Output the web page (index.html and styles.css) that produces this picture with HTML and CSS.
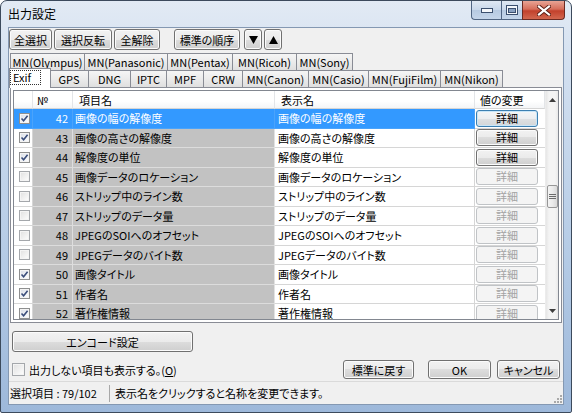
FILE: index.html
```html
<!DOCTYPE html>
<html lang="ja">
<head>
<meta charset="utf-8">
<title>出力設定</title>
<link rel="stylesheet" href="styles.css">
</head>
<body>
<div class="window">
  <div class="titlebar">
    <span class="title">出力設定</span>
    <div class="caption">
      <span class="cap cap-min"><svg width="12" height="5" viewBox="0 0 12 5"><rect x="0.5" y="0.5" width="11" height="4" fill="#f4f7fb" stroke="#3b4f6e"/></svg></span>
      <span class="cap cap-max"><svg width="12" height="10" viewBox="0 0 12 10"><rect x="0.5" y="0.5" width="11" height="9" fill="#f4f7fb" stroke="#3b4f6e"/><rect x="2.5" y="3.5" width="7" height="4" fill="#8aa1c1" stroke="#3b4f6e"/></svg></span>
      <span class="cap cap-close"><svg width="14" height="11" viewBox="0 0 14 11"><path d="M2 1.5 L12 9.5 M12 1.5 L2 9.5" stroke="#5b1f16" stroke-width="4" stroke-linecap="square"/><path d="M2 1.5 L12 9.5 M12 1.5 L2 9.5" stroke="#ffffff" stroke-width="2.2" stroke-linecap="square"/></svg></span>
    </div>
  </div>
  <div class="client">
    <div class="toolbar">
      <button class="btn b-all">全選択</button>
      <button class="btn b-inv">選択反転</button>
      <button class="btn b-none">全解除</button>
      <button class="btn b-order">標準の順序</button>
      <button class="btn b-arrow"><svg width="9" height="8" viewBox="0 0 9 8"><path d="M0 0 H9 L4.5 8 Z" fill="#000"/></svg></button>
      <button class="btn b-arrow b-up"><svg width="9" height="8" viewBox="0 0 9 8"><path d="M0 8 H9 L4.5 0 Z" fill="#000"/></svg></button>
    </div>
    <div class="tabs">
      <div class="tabrow row1">
        <span class="tab">MN(Olympus)</span>
        <span class="tab">MN(Panasonic)</span>
        <span class="tab">MN(Pentax)</span>
        <span class="tab">MN(Ricoh)</span>
        <span class="tab">MN(Sony)</span>
      </div>
      <div class="tabrow row2">
        <span class="tab tab-sel"><span class="focus">Exif</span></span>
        <span class="tab">GPS</span>
        <span class="tab">DNG</span>
        <span class="tab">IPTC</span>
        <span class="tab">MPF</span>
        <span class="tab">CRW</span>
        <span class="tab">MN(Canon)</span>
        <span class="tab">MN(Casio)</span>
        <span class="tab">MN(FujiFilm)</span>
        <span class="tab">MN(Nikon)</span>
      </div>
    </div>
    <div class="panel">
      <div class="list">
        <div class="grid">
          <div class="row head">
            <span class="c c-chk"></span>
            <span class="c c-no">№</span>
            <span class="c c-name">項目名</span>
            <span class="c c-disp">表示名</span>
            <span class="c c-val">値の変更</span>
          </div>
          <div class="row sel">
            <span class="c c-chk"><span class="cb on"><svg width="9" height="9" viewBox="0 0 9 9"><path d="M1.5 4.5 L3.6 6.8 L7.6 1.8" fill="none" stroke="#3a4d7a" stroke-width="1.6"/></svg></span></span>
            <span class="c c-no">42</span>
            <span class="c c-name">画像の幅の解像度</span>
            <span class="c c-disp">画像の幅の解像度</span>
            <span class="c c-val"><span class="dbtn focused">詳細</span></span>
          </div>
          <div class="row">
            <span class="c c-chk"><span class="cb on"><svg width="9" height="9" viewBox="0 0 9 9"><path d="M1.5 4.5 L3.6 6.8 L7.6 1.8" fill="none" stroke="#3a4d7a" stroke-width="1.6"/></svg></span></span>
            <span class="c c-no">43</span>
            <span class="c c-name">画像の高さの解像度</span>
            <span class="c c-disp">画像の高さの解像度</span>
            <span class="c c-val"><span class="dbtn">詳細</span></span>
          </div>
          <div class="row">
            <span class="c c-chk"><span class="cb on"><svg width="9" height="9" viewBox="0 0 9 9"><path d="M1.5 4.5 L3.6 6.8 L7.6 1.8" fill="none" stroke="#3a4d7a" stroke-width="1.6"/></svg></span></span>
            <span class="c c-no">44</span>
            <span class="c c-name">解像度の単位</span>
            <span class="c c-disp">解像度の単位</span>
            <span class="c c-val"><span class="dbtn">詳細</span></span>
          </div>
          <div class="row">
            <span class="c c-chk"><span class="cb"></span></span>
            <span class="c c-no">45</span>
            <span class="c c-name">画像データのロケーション</span>
            <span class="c c-disp">画像データのロケーション</span>
            <span class="c c-val"><span class="dbtn off">詳細</span></span>
          </div>
          <div class="row">
            <span class="c c-chk"><span class="cb"></span></span>
            <span class="c c-no">46</span>
            <span class="c c-name">ストリップ中のライン数</span>
            <span class="c c-disp">ストリップ中のライン数</span>
            <span class="c c-val"><span class="dbtn off">詳細</span></span>
          </div>
          <div class="row">
            <span class="c c-chk"><span class="cb"></span></span>
            <span class="c c-no">47</span>
            <span class="c c-name">ストリップのデータ量</span>
            <span class="c c-disp">ストリップのデータ量</span>
            <span class="c c-val"><span class="dbtn off">詳細</span></span>
          </div>
          <div class="row">
            <span class="c c-chk"><span class="cb"></span></span>
            <span class="c c-no">48</span>
            <span class="c c-name">JPEGのSOIへのオフセット</span>
            <span class="c c-disp">JPEGのSOIへのオフセット</span>
            <span class="c c-val"><span class="dbtn off">詳細</span></span>
          </div>
          <div class="row">
            <span class="c c-chk"><span class="cb"></span></span>
            <span class="c c-no">49</span>
            <span class="c c-name">JPEGデータのバイト数</span>
            <span class="c c-disp">JPEGデータのバイト数</span>
            <span class="c c-val"><span class="dbtn off">詳細</span></span>
          </div>
          <div class="row">
            <span class="c c-chk"><span class="cb on"><svg width="9" height="9" viewBox="0 0 9 9"><path d="M1.5 4.5 L3.6 6.8 L7.6 1.8" fill="none" stroke="#3a4d7a" stroke-width="1.6"/></svg></span></span>
            <span class="c c-no">50</span>
            <span class="c c-name">画像タイトル</span>
            <span class="c c-disp">画像タイトル</span>
            <span class="c c-val"><span class="dbtn off">詳細</span></span>
          </div>
          <div class="row">
            <span class="c c-chk"><span class="cb on"><svg width="9" height="9" viewBox="0 0 9 9"><path d="M1.5 4.5 L3.6 6.8 L7.6 1.8" fill="none" stroke="#3a4d7a" stroke-width="1.6"/></svg></span></span>
            <span class="c c-no">51</span>
            <span class="c c-name">作者名</span>
            <span class="c c-disp">作者名</span>
            <span class="c c-val"><span class="dbtn off">詳細</span></span>
          </div>
          <div class="row">
            <span class="c c-chk"><span class="cb on"><svg width="9" height="9" viewBox="0 0 9 9"><path d="M1.5 4.5 L3.6 6.8 L7.6 1.8" fill="none" stroke="#3a4d7a" stroke-width="1.6"/></svg></span></span>
            <span class="c c-no">52</span>
            <span class="c c-name">著作権情報</span>
            <span class="c c-disp">著作権情報</span>
            <span class="c c-val"><span class="dbtn off">詳細</span></span>
          </div>
        </div>
        <div class="sb">
          <span class="sb-btn"><svg width="7" height="4" viewBox="0 0 7 4"><path d="M0 4 H7 L3.5 0 Z" fill="#3d3d3d"/></svg></span>
          <span class="sb-track"><span class="sb-thumb"><svg width="7" height="7" viewBox="0 0 7 7"><path d="M0 1.5 H7 M0 3.5 H7 M0 5.5 H7" stroke="#6b6b6b" stroke-width="1"/></svg></span></span>
          <span class="sb-btn"><svg width="7" height="4" viewBox="0 0 7 4"><path d="M0 0 H7 L3.5 4 Z" fill="#3d3d3d"/></svg></span>
        </div>
      </div>
    </div>
    <button class="btn b-encode">エンコード設定</button>
    <div class="optrow">
      <label class="opt"><span class="cb big"></span>出力しない項目も表示する。(<u>O</u>)</label>
      <div class="dlgbtns">
        <button class="btn b-reset">標準に戻す</button>
        <button class="btn b-ok">OK</button>
        <button class="btn b-cancel">キャンセル</button>
      </div>
    </div>
    <div class="status">
      <span class="st-left">選択項目 : 79/102</span>
      <span class="st-sep"></span>
      <span class="st-right">表示名をクリックすると名称を変更できます。</span>
      <span class="grip"><svg width="9" height="9" viewBox="0 0 9 9"><g fill="#a9a9a9"><rect x="7" y="1" width="2" height="2"/><rect x="4" y="4" width="2" height="2"/><rect x="7" y="4" width="2" height="2"/><rect x="1" y="7" width="2" height="2"/><rect x="4" y="7" width="2" height="2"/><rect x="7" y="7" width="2" height="2"/></g></svg></span>
    </div>
  </div>
</div>
</body>
</html>
```

FILE: styles.css
```css
* { box-sizing: border-box; }
html, body { margin: 0; padding: 0; background: #ffffff; }
body {
  font-family: "Noto Sans CJK JP", "Noto Sans", sans-serif;
  font-size: 11px;
  color: #000;
  font-feature-settings: "palt" 1;
}

.window {
  width: 572px;
  height: 413px;
  border: 1px solid #3c4a5c;
  border-radius: 7px 7px 2px 2px;
  background: linear-gradient(180deg, #e2eaf4 0%, #d0deef 20%, #b6cce6 60%, #9db8da 100%);
  padding: 0 7px 7px 7px;
  display: flex;
  flex-direction: column;
  overflow: hidden;
}

.titlebar {
  height: 26px;
  display: flex;
  align-items: flex-start;
  flex: none;
}
.title {
  font-size: 12px;
  line-height: 25px;
  color: #000;
}
.caption {
  margin-left: auto;
  margin-right: -1px;
  display: flex;
  height: 19px;
}
.cap {
  height: 19px;
  display: flex;
  align-items: center;
  justify-content: center;
  border: 1px solid #4f6482;
  border-top: none;
}
.cap-min {
  width: 30px;
  border-radius: 0 0 0 4px;
  border-right: none;
  background: linear-gradient(180deg, #dfe8f3 0%, #c8d7ea 50%, #b6c9e1 50%, #c4d5ea 100%);
}
.cap-max {
  width: 21px;
  border-right: none;
  background: linear-gradient(180deg, #dfe8f3 0%, #c8d7ea 50%, #b6c9e1 50%, #c4d5ea 100%);
}
.cap-close {
  width: 43px;
  border-radius: 0 0 4px 0;
  border-color: #6b2a22;
  background: linear-gradient(180deg, #e8a495 0%, #d66e5b 45%, #c2412c 55%, #d2674f 100%);
}

.client {
  flex: 1;
  background: #f0f0f0;
  border: 1px solid #8498b2;
  display: flex;
  flex-direction: column;
  min-height: 0;
}

/* buttons */
.btn {
  font: inherit;
  font-feature-settings: "palt" 1;
  color: #000;
  height: 21px;
  padding: 0;
  border: 1px solid #707070;
  border-radius: 3px;
  background: linear-gradient(180deg, #f2f2f2 0%, #ebebeb 50%, #dddddd 50%, #cfcfcf 100%);
  box-shadow: inset 0 0 0 1px #fbfbfb;
  display: flex;
  align-items: center;
  justify-content: center;
  flex: none;
}

.toolbar {
  display: flex;
  padding-top: 1px;
  flex: none;
}
.b-all { width: 43px; }
.b-inv { width: 58px; margin-left: 2px; }
.b-none { width: 46px; margin-left: 2px; }
.b-order { width: 66px; margin-left: 14px; }
.b-arrow { width: 18px; margin-left: 4px; }
.b-up { margin-left: 2px; }

/* tabs */
.tabs {
  margin-top: 3px;
  flex: none;
}
.tabrow {
  display: flex;
  height: 17px;
  padding-left: 1px;
}
.tab {
  height: 17px;
  border: 1px solid #898c95;
  border-bottom: none;
  background: linear-gradient(180deg, #f5f5f5 0%, #ebebeb 50%, #dfdfdf 100%);
  display: flex;
  align-items: center;
  justify-content: center;
  line-height: 14px;
  flex: none;
}
.tab + .tab { margin-left: -1px; }
.row1 .tab:nth-child(1) { width: 75px; }
.row1 .tab:nth-child(2) { width: 84px; }
.row1 .tab:nth-child(3) { width: 66px; }
.row1 .tab:nth-child(4) { width: 65px; }
.row1 .tab:nth-child(5) { width: 57px; }
.row2 .tab:nth-child(1) { width: 42px; }
.row2 .tab:nth-child(2) { width: 40px; }
.row2 .tab:nth-child(3) { width: 43px; }
.row2 .tab:nth-child(4) { width: 37px; }
.row2 .tab:nth-child(5) { width: 38px; }
.row2 .tab:nth-child(6) { width: 40px; }
.row2 .tab:nth-child(7) { width: 67px; }
.row2 .tab:nth-child(8) { width: 61px; }
.row2 .tab:nth-child(9) { width: 73px; }
.row2 .tab:nth-child(10) { width: 63px; }
.tab-sel {
  margin-top: -2px;
  height: 20px;
  margin-left: -1px;
  background: #ffffff;
  z-index: 2;
  justify-content: flex-start;
  padding-left: 1px;
  align-items: flex-start;
  padding-top: 1px;
}
.tab-sel + .tab { margin-left: -2px; }
.focus {
  outline: 1px dotted #333;
  padding: 0 9px 0 2px;
  line-height: 13px;
  margin-top: 1px;
}

/* panel + list */
.panel {
  flex: none;
  height: 236px;
  margin: 0 1px;
  border: 1px solid #898c95;
  background: #ffffff;
  padding: 2px;
  position: relative;
  z-index: 1;
}
.list {
  height: 230px;
  border: 1px solid #828790;
  display: flex;
  overflow: hidden;
  background: #fff;
}
.grid {
  width: 531px;
  flex: none;
  overflow: hidden;
}
.row {
  display: grid;
  grid-template-columns: 19px 40px 202px 200px 70px;
  height: 19.5px;
}
.row.head { height: 18px; }
.c {
  display: flex;
  align-items: center;
  overflow: hidden;
  white-space: nowrap;
  border-right: 1px solid #d6d6d6;
  border-bottom: 1px solid #d6d6d6;
  line-height: 14px;
}
.head .c {
  background: linear-gradient(180deg, #ffffff 0%, #ffffff 60%, #f4f5f7 100%);
  border-right: 1px solid #e3e5e8;
  border-bottom: 1px solid #d5d5d5;
}
.head .c-no { justify-content: flex-start; padding-left: 4px; padding-right: 0; }
.head .c-name, .head .c-disp { padding-left: 6px; }
.head .c-val { padding-left: 5px; justify-content: flex-start; }
.c-chk { justify-content: center; background: #fff; padding-left: 2px; }
.c-no {
  justify-content: flex-end;
  padding-right: 4px;
  background: #c2c2c2;
  border-right-color: #dedede;
  border-bottom-color: #dcdcdc;
}
.c-name {
  padding-left: 2px;
  background: #c2c2c2;
  border-right-color: #e2e2e2;
  border-bottom-color: #dcdcdc;
}
.c-disp { padding-left: 3px; background: #fff; }
.c-val { padding-left: 1px; background: #fff; border-right: none; }
.sel .c-chk, .sel .c-no, .sel .c-name, .sel .c-disp {
  background: #3399ff;
  color: #fff;
  border-color: #4aa3fb;
}

.cb {
  width: 11px;
  height: 11px;
  border: 1px solid #a4a7ab;
  background: linear-gradient(135deg, #e0e0e0 0%, #f2f2f2 60%, #ffffff 100%);
  box-shadow: inset 0 0 0 1px #f4f4f4;
  display: flex;
  align-items: center;
  justify-content: center;
  flex: none;
}
.cb.on {
  border-color: #8e8f8f;
  background: linear-gradient(135deg, #d9dde6 0%, #f0f2f6 60%, #ffffff 100%);
}
.cb.big { width: 13px; height: 13px; margin-right: 4px; }

.dbtn {
  width: 62px;
  height: 17px;
  border: 1px solid #707070;
  border-radius: 3px;
  background: linear-gradient(180deg, #f2f2f2 0%, #ebebeb 50%, #dddddd 50%, #cfcfcf 100%);
  box-shadow: inset 0 0 0 1px #fbfbfb;
  display: flex;
  align-items: center;
  justify-content: center;
  line-height: 13px;
  color: #000;
}
.dbtn.focused {
  border-color: #3c7fb1;
  background: linear-gradient(180deg, #f4f6f8 0%, #eceef0 50%, #dfe1e3 50%, #d3d6d9 100%);
  box-shadow: inset 0 0 0 1px #c9e6f8;
}
.dbtn.off {
  border-color: #c0c3c6;
  background: #f4f4f4;
  box-shadow: none;
  color: #a3a3a3;
}

/* scrollbar */
.sb {
  width: 13px;
  flex: none;
  display: flex;
  flex-direction: column;
  background: linear-gradient(90deg, #e6e6e6 0%, #f4f4f4 25%, #f4f4f4 75%, #e9e9e9 100%);
  border-left: 1px solid #ececec;
}
.sb-btn {
  height: 17px;
  flex: none;
  display: flex;
  align-items: center;
  justify-content: center;
}
.sb-track {
  flex: 1;
  display: flex;
  flex-direction: column;
  align-items: center;
}
.sb-thumb {
  margin-top: 77px;
  width: 11px;
  height: 23px;
  border: 1px solid #979797;
  border-radius: 2px;
  background: linear-gradient(90deg, #f4f4f4 0%, #ebebeb 50%, #d9d9d9 100%);
  display: flex;
  align-items: center;
  justify-content: center;
}

/* bottom */
.b-encode {
  width: 181px;
  margin: 8px 0 0 3px;
}
.optrow {
  flex: none;
  display: flex;
  align-items: center;
  height: 19px;
  margin-top: 8px;
}
.opt {
  display: flex;
  align-items: center;
  margin-left: 3px;
  line-height: 14px;
}
.dlgbtns {
  margin-left: auto;
  margin-right: 3px;
  display: flex;
}
.dlgbtns .btn { height: 19px; }
.b-reset { width: 71px; }
.b-ok { width: 63px; margin-left: 14px; }
.b-cancel { width: 63px; margin-left: 6px; }

.status {
  margin-top: auto;
  flex: none;
  height: 23px;
  border-top: 1px solid #dadada;
  display: flex;
  align-items: center;
  position: relative;
}
.st-left { padding-left: 1px; width: 100px; font-feature-settings: normal; }
.st-sep {
  width: 1px;
  height: 17px;
  background: #a8a8a8;
  margin-right: 5px;
}
.st-right { flex: 1; }
.grip {
  position: absolute;
  right: 1px;
  bottom: 1px;
  display: flex;
}
```
